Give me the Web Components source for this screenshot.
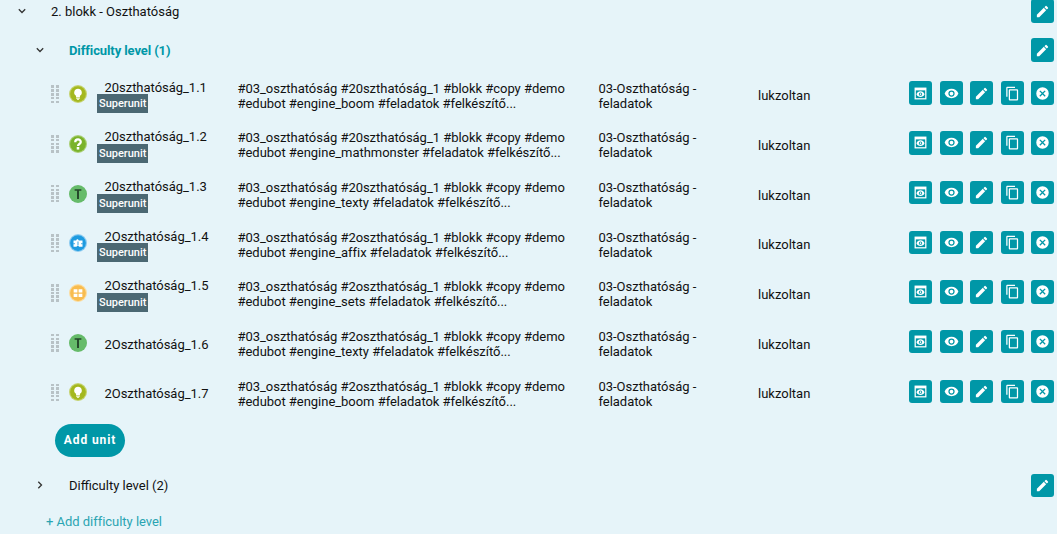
<!DOCTYPE html>
<html>
<head>
<meta charset="utf-8">
<style>
  html, body { margin: 0; height: 534px; overflow: hidden; background: #e6f4f9; }
  body { font-family: Roboto, "Liberation Sans", sans-serif; font-size: 13px; color: #111; }
</style>
</head>
<body>
<block-page>
  <tree-head level="1" open label="2. blokk - Oszthatóság"></tree-head>
  <tree-head level="2" open active label="Difficulty level (1)"></tree-head>
  <unit-row name="20szthatóság_1.1" kind="bulb" super engine="20szthatóság_1" tag="engine_boom"></unit-row>
  <unit-row name="20szthatóság_1.2" kind="quiz" super engine="20szthatóság_1" tag="engine_mathmonster"></unit-row>
  <unit-row name="20szthatóság_1.3" kind="text" super engine="20szthatóság_1" tag="engine_texty"></unit-row>
  <unit-row name="2Oszthatóság_1.4" kind="affix" super engine="2oszthatóság_1" tag="engine_affix"></unit-row>
  <unit-row name="2Oszthatóság_1.5" kind="sets" super engine="2oszthatóság_1" tag="engine_sets"></unit-row>
  <unit-row name="2Oszthatóság_1.6" kind="text" engine="2oszthatóság_1" tag="engine_texty"></unit-row>
  <unit-row name="2Oszthatóság_1.7" kind="bulb" engine="2oszthatóság_1" tag="engine_boom"></unit-row>
  <add-unit>Add unit</add-unit>
  <tree-head level="2" style="margin-top:1px" label="Difficulty level (2)"></tree-head>
  <add-link>+ Add difficulty level</add-link>
</block-page>

<script>
const ICONS = {
  preview: '<path fill="#fff" d="M2.500 2.500h19v19h-19z"/><path fill="#0097a7" d="M4.500 7h15v12.500h-15z"/><path fill="#fff" d="M12 8.500c-3 0-5.400 1.900-6.500 4.500 1.100 2.600 3.500 4.500 6.500 4.500s5.400-1.900 6.500-4.500C17.400 10.400 15 8.500 12 8.500zm0 7.200a2.700 2.700 0 1 1 0-5.400 2.700 2.700 0 0 1 0 5.400z"/><circle fill="#fff" cx="12" cy="13" r="1.300"/>',
  eye: '<path fill="#fff" d="M12 4.500C7 4.500 2.700 7.600 1 12c1.700 4.400 6 7.500 11 7.500s9.300-3.100 11-7.500c-1.700-4.400-6-7.500-11-7.500zM12 17a5 5 0 1 1 0-10 5 5 0 0 1 0 10zm0-8a3 3 0 1 0 0 6 3 3 0 0 0 0-6z"/>',
  edit: '<path fill="#fff" d="M3 17.250V21h3.750L17.810 9.940l-3.750-3.750L3 17.250zM20.710 7.040a1 1 0 0 0 0-1.410l-2.340-2.340a1 1 0 0 0-1.410 0l-1.830 1.830 3.750 3.750 1.830-1.830z"/>',
  copy: '<path fill="#fff" d="M16 1H4c-1.100 0-2 .9-2 2v14h2V3h12V1zm3 4H8c-1.100 0-2 .9-2 2v14c0 1.100.9 2 2 2h11c1.100 0 2-.9 2-2V7c0-1.100-.9-2-2-2zm0 16H8V7h11v14z"/>',
  close: '<path fill="#fff" d="M12 2a10 10 0 1 0 0 20 10 10 0 0 0 0-20zm5 13.590L15.590 17 12 13.410 8.410 17 7 15.590 10.590 12 7 8.410 8.410 7 12 10.590 15.590 7 17 8.410 13.410 12 17 15.590z"/>'
};

// kis ikonok az egység típusához
const KINDS = {
  bulb: { bg: '#a4b81f', ring: '#c5d36f', svg: '<path fill="#fff" d="M12 5a5 5 0 0 0-2.600 9.300V16.500h5.200v-2.200A5 5 0 0 0 12 5zM9.600 17.300h4.800v1.100H9.600zM10.600 19h2.800v1h-2.800z"/>' },
  quiz: { bg: '#7ab32b', ring: '#a9cf74', svg: '<path fill="none" stroke="#fff" stroke-width="3" d="M8.300 9.500c0-4.800 7.400-4.800 7.400-.3 0 2.800-3.700 2.800-3.700 5.500"/><rect fill="#fff" x="10.300" y="16" width="3.400" height="3.400"/>' },
  text: { bg: '#66bb6a', ring: '#66bb6a', svg: '<path fill="#24472a" d="M7.500 5.500h9v2.300h-3.200v10.700h-2.600V7.800H7.500z"/>' },
  affix: { bg: '#1e9be0', ring: '#8ccbf0', svg: '<path fill="#fff" d="M6 8.500h3.500l1-1.500h1.500l1 1.500H18v8.500h-4.500l-1-1.500H11l-1 1.500H6z"/><path fill="#1e9be0" d="M11.400 10h1.200v5h-1.200zM6 12h1.500v1.500H6zM16.500 12H18v1.500h-1.500z"/>' },
  sets: { bg: '#f8bc4f', ring: '#fbdc9f', svg: '<path fill="#fff" d="M6.200 7h5v4.300h-5zM12.800 7h5v4.300h-5zM6.200 12.900h5v4.300h-5zM12.800 12.900h5v4.300h-5z"/>' }
};

customElements.define('block-page', class extends HTMLElement {
  constructor() {
    super();
    this.attachShadow({ mode: 'open' }).innerHTML = `
      <style>
        :host { display: flex; flex-direction: column; height: 534px; margin-top: -1px; overflow: hidden; }
      </style>
      <slot></slot>`;
  }
});

customElements.define('icon-btn', class extends HTMLElement {
  constructor() {
    super();
    const name = this.getAttribute('icon');
    this.attachShadow({ mode: 'open' }).innerHTML = `
      <style>
        :host { display: flex; align-items: center; justify-content: center; flex: none; width: 23px; height: 23.500px; background: #0097a7; border-radius: 3px; }
        svg { width: 15px; height: 15px; display: block; }
      </style>
      <svg viewBox="0 0 24 24">${ICONS[name]}</svg>`;
  }
});

customElements.define('tree-head', class extends HTMLElement {
  constructor() {
    super();
    const level = this.getAttribute('level');
    const open = this.hasAttribute('open');
    const arrow = open ? 'M1.800 3.300 5 6.500l3.200-3.200' : 'M3.300 1.800 6.500 5 3.300 8.200';
    this.attachShadow({ mode: 'open' }).innerHTML = `
      <style>
        :host { display: flex; align-items: center; height: 38.400px; padding: 8px 3px 0 ${level == 1 ? 17 : 35}px; flex: none; }
        :host([level="1"]) { height: 24px; padding-top: 0; }
        :host([active]) { color: #0097a7; font-weight: 700; letter-spacing: -.1px; }
        svg { width: 10px; height: 10px; flex: none; }
        span { margin-left: 24px; flex: 1; }
      </style>
      <svg viewBox="0 0 10 10"><path d="${arrow}" fill="none" stroke="#333" stroke-width="1.300"/></svg>
      <span>${this.getAttribute('label')}</span>
      <icon-btn icon="edit"></icon-btn>`;
  }
});

customElements.define('unit-icon', class extends HTMLElement {
  constructor() {
    super();
    const k = KINDS[this.getAttribute('kind')];
    this.attachShadow({ mode: 'open' }).innerHTML = `
      <style>
        :host { display: block; flex: none; width: 18px; height: 18px; }
        svg { display: block; width: 18px; height: 18px; }
      </style>
      <svg viewBox="0 0 24 24"><circle cx="12" cy="12" r="12" fill="${k.ring}"/><circle cx="12" cy="12" r="10.500" fill="${k.bg}"/>${k.svg}</svg>`;
  }
});

customElements.define('unit-row', class extends HTMLElement {
  constructor() {
    super();
    const a = n => this.getAttribute(n);
    const badge = this.hasAttribute('super') ? '<b>Superunit</b>' : '';
    const dots = '<i></i>'.repeat(10);
    this.attachShadow({ mode: 'open' }).innerHTML = `
      <style>
        :host { display: grid; grid-template-columns: 45.500px 141px 361px 159.500px 151px auto; align-items: center; height: 49.700px; padding-left: 51px; flex: none; }
        .lead { display: flex; align-items: center; gap: 10px; }
        .drag { display: grid; grid-template-columns: 3px 3px; gap: 1.200px 2px; width: 8px; }
        .drag i { height: 2.600px; background: #b8c2c6; }
        .name { position: relative; padding-left: 8px; line-height: 15px; margin-top: 1px; letter-spacing: -.03px; }
        .name div { white-space: nowrap; margin-top: ${badge ? -15 : 2}px; }
        b { position: absolute; left: .5px; top: -.5px; background: #4b6873; color: #fff; font-weight: 500; font-size: 11px; line-height: 19px; height: 19px; padding: 0 2px; letter-spacing: 0; }
        .two { line-height: 15px; white-space: nowrap; margin-top: 3px; letter-spacing: -.03px; }
        .actions { display: flex; gap: 7.500px; margin-top: -2px; }
        .owner { margin-top: 3px; }
      </style>
      <div class="lead">
        <div class="drag">${dots}</div>
        <unit-icon kind="${a('kind')}"></unit-icon>
      </div>
      <div class="name"><div>${a('name')}</div>${badge}</div>
      <div class="two"><div>#03_oszthatóság #${a('engine')} #blokk #copy #demo</div><div>#edubot #${a('tag')} #feladatok #felkészítő...</div></div>
      <div class="two"><div>03-Oszthatóság -</div><div>feladatok</div></div>
      <div class="owner">lukzoltan</div>
      <div class="actions">
        <icon-btn icon="preview"></icon-btn><icon-btn icon="eye"></icon-btn><icon-btn icon="edit"></icon-btn><icon-btn icon="copy"></icon-btn><icon-btn icon="close"></icon-btn>
      </div>`;
  }
});

customElements.define('add-unit', class extends HTMLElement {
  constructor() {
    super();
    this.attachShadow({ mode: 'open' }).innerHTML = `
      <style>
        :host { display: block; flex: none; align-self: flex-start; margin-left: 55px; margin-top: 7px; height: 33px; line-height: 32px; width: 70px; text-align: center; background: #0097a7; color: #fff; border-radius: 17px; font-weight: 700; font-size: 12px; letter-spacing: .9px; }
      </style><slot></slot>`;
  }
});

customElements.define('add-link', class extends HTMLElement {
  constructor() {
    super();
    this.attachShadow({ mode: 'open' }).innerHTML = `
      <style>
        :host { display: block; flex: none; margin-left: 46px; margin-top: 9.600px; color: #2aa4b2; letter-spacing: -.03px; }
      </style><slot></slot>`;
  }
});
</script>
</body>
</html>
